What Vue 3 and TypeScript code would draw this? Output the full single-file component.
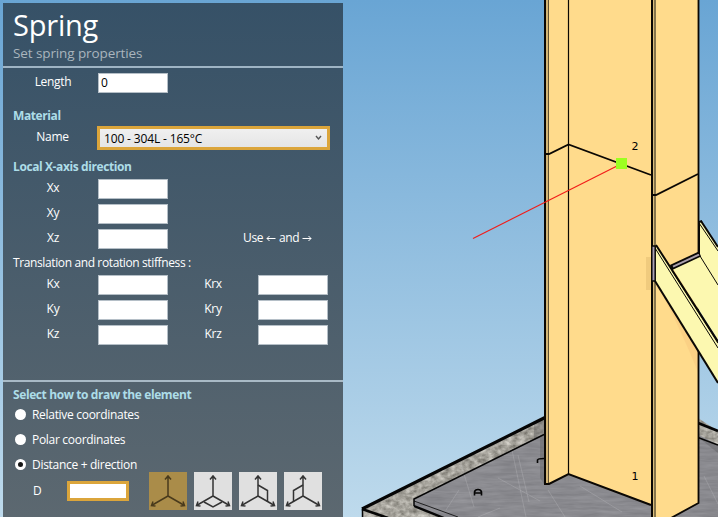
<script setup lang="ts">
import { ref } from 'vue'

const length = ref('0')
const distance = ref('')
const material = '100 - 304L - 165°C'
const axes = ['Xx', 'Xy', 'Xz']
const stiffness: [string, string][] = [
  ['Kx', 'Krx'],
  ['Ky', 'Kry'],
  ['Kz', 'Krz'],
]
const modes = ['Relative coordinates', 'Polar coordinates', 'Distance + direction']
const mode = ref(2)
const planes: string[] = [
  '',
  'M10 30 19 35 28 30',
  'M19 13 28.500 18.500V29.500',
  'M19 13 9.500 18.500V29.500',
]
const plane = ref(0)
</script>

<template>
  <main class="app">
    <svg class="scene" viewBox="0 0 718 517" width="718" height="517">
      <defs>
        <filter id="grain" x="0" y="0" width="1" height="1" color-interpolation-filters="sRGB">
          <feTurbulence type="fractalNoise" baseFrequency="0.16 0.22" numOctaves="3" seed="4" />
          <feColorMatrix values="0.5 0 0 0 0.4  0.5 0 0 0 0.39  0.5 0 0 0 0.36  0 0 0 0 1" />
          <feComposite in2="SourceGraphic" operator="in" />
        </filter>
        <filter id="steel" x="0" y="0" width="1" height="1" color-interpolation-filters="sRGB">
          <feTurbulence type="fractalNoise" baseFrequency="0.04 0.3" numOctaves="3" seed="8" />
          <feColorMatrix values="0.12 0 0 0 0.48  0.12 0 0 0 0.48  0.12 0 0 0 0.5  0 0 0 0 1" />
          <feComposite in2="SourceGraphic" operator="in" />
        </filter>
      </defs>

      <!-- concrete block and base plate -->
      <path filter="url(#grain)" d="M362 509 544 418H698L718 431V517H362Z" />
      <path filter="url(#steel)" d="M414 499 544 434.5H698L718 445V517H442L414 507Z" />
      <path fill="#55555a" opacity=".35" d="M534 423 544 418V484L540 478V438L534 440ZM699 438 718 445V453Z" />
      <g fill="none" stroke="#c4c4c8" stroke-width=".8" opacity=".35">
        <path d="M461 464 474 507M512 450 526 517M518 455 529 502M548 490 565 517M459 490 446 510M498 478 540 501M580 486 622 512M704 476 718 504M478 517 500 508" />
      </g>
      <g fill="none" stroke="#050505">
        <path stroke-width="3.2" d="M362 509 545 417.500" />
        <path stroke-width="2.600" d="M362 509 388 518M698 423 718 431" />
        <path stroke-width="1.500" d="M362.500 509V517M544 434.500 414 499V506M698 437.500 718 445" />
        <path stroke-width="2.400" d="M414 506 444 518" />
        <path stroke-width=".8" d="M414 501 458 517" />
        <path stroke-width="1.600" d="M474.500 495.500V492Q475 489.500 478 489.500T481.500 492V495.500M475 493H481M537.500 463V460Q538 458.500 544 458.500" />
      </g>

      <!-- column -->
      <path fill="#ffdb8c" d="M544.500 0H698.500V503L672 517H652V505L568.500 474 549 484H544.500Z" />
      <path fill="#f0cb7e" d="M646 257H651V290H646Z" />
      <path fill="#fbd185" d="M656 284 698 350V372Q676 318 656 284Z" />
      <path fill="#d3b574" d="M545.500 0H548V483H545.500Z" />
      <path fill="#dcbe7b" d="M652 0H654V517H652Z" />
      <path fill="#86754c" d="M654 0H656V517H654Z" />
      <g fill="none" stroke="#0a0703">
        <path stroke-width="2" d="M545 0V484H549L568.500 474 651 505" />
        <path stroke-width="2" d="M652 0V517" />
        <path stroke-width="1" d="M548.500 0V483" opacity=".65" />
        <path stroke-width="1.200" d="M568.500 0V474" />
        <path stroke-width="1.800" d="M698.500 0V503L671 518" />
        <path stroke-width="1.800" d="M545 154H549L568.500 144.500 651 175M652 195H656L698 174" />
      </g>

      <!-- brace -->
      <path fill="#fcf8b0" d="M699 223 701 221 718 247V340L672 267 699 254Z" />
      <path fill="#fcf8b0" d="M655 245 718 341V383L655 281Z" />
      <g fill="none" stroke="#0a0805">
        <path stroke-width="5.500" d="M671 267.500 700 254" />
        <path stroke="#aaa0ad" stroke-width="2" d="M673 266.700 699 254.600" />
        <path stroke-width="2" d="M701 221 718 247M656 245 718 341.500" />
        <path stroke-width="1" d="M699 223 718 251M700 256 718 285M655 248 718 348" />
        <path stroke-width="1.200" d="M672 270.500 718 343" />
        <path stroke-width="2" d="M655 281 718 383" />
        <path stroke-width="2" d="M699 254V222L702 221" />
      </g>
      <path fill="#aaa0b5" stroke="#0a0805" stroke-width="1.500" d="M651.800 246H655.200V281H651.800Z" />

      <path stroke="#f21c18" stroke-width="1.150" d="M473 238.500 618 165.500" />
      <path fill="#9cff20" d="M616 158H627V169H616Z" />
      <text x="631.500" y="150">2</text>
      <text x="631.500" y="480">1</text>
    </svg>

    <section class="panel">
      <header>
        <h1>Spring</h1>
        <p>Set spring properties</p>
      </header>

      <form class="properties" @submit.prevent>
        <div class="row first">
          <label>Length</label>
          <input v-model="length" />
        </div>
        <h2 class="material">Material</h2>
        <div class="row name">
          <label>Name</label>
          <button type="button" class="combo">
            <span>{{ material }}</span>
            <svg width="7" height="6" viewBox="0 0 7 6"><path d="M1 1 3.500 4 6 1" fill="none" stroke="#555" stroke-width="1.400" /></svg>
          </button>
        </div>
        <h2 class="local">Local X-axis direction</h2>
        <div v-for="a in axes" :key="a" class="row">
          <label>{{ a }}</label>
          <input />
          <span v-if="a === 'Xz'" class="hint">Use
            <svg width="10" height="7" viewBox="0 0 10 7"><path d="M9.500 3.500H1M3.500 1 1 3.500 3.500 6" /></svg>
            and
            <svg width="10" height="7" viewBox="0 0 10 7"><path d="M.5 3.500H9M6.500 1 9 3.500 6.500 6" /></svg>
          </span>
        </div>
        <p class="caption">Translation and rotation stiffness :</p>
        <div v-for="[k, r] in stiffness" :key="k" class="row">
          <label>{{ k }}</label>
          <input />
          <label>{{ r }}</label>
          <input />
        </div>
      </form>

      <section class="drawing">
        <h2>Select how to draw the element</h2>
        <div v-for="(m, i) in modes" :key="m" class="radio" @click="mode = i">
          <i :class="{ on: mode === i }"></i>
          <span>{{ m }}</span>
        </div>
        <div class="direction">
          <label>D</label>
          <input v-model="distance" />
          <div class="planes">
            <button v-for="(p, i) in planes" :key="i" type="button" :class="{ on: plane === i }" @click="plane = i">
              <svg width="38" height="38" viewBox="0 0 38 38">
                <path d="M19 4V24L2.500 33.500M19 24 35.500 33.500M16 7.500 19 4 22 7.500M4 29.500 2.500 33.500 6.500 34M34 29.500 35.500 33.500 31.500 34" />
                <path v-if="p" :d="p" />
              </svg>
            </button>
          </div>
        </div>
      </section>
    </section>
  </main>
</template>

<style>
body {
  margin: 0;
  overflow: hidden;
}
</style>

<style scoped>
.app {
  box-sizing: border-box;
  position: relative;
  width: 718px;
  height: 517px;
  padding: 3px 0 0 3px;
  overflow: hidden;
  background: linear-gradient(#69a5d4, #bedaec);
  font: 12px/16px "Open Sans", "Noto Sans", sans-serif;
  letter-spacing: -0.3px;
  color: #fff;
}
.scene {
  position: absolute;
  left: 0;
  top: 0;
}
.scene text {
  font: 11px "DejaVu Sans", sans-serif;
  fill: #000;
}
.panel {
  position: relative;
  width: 340px;
  height: 514px;
  background: linear-gradient(#365167, #5c6870);
}
h1, h2, p {
  margin: 0;
}
header {
  box-sizing: border-box;
  height: 65px;
  padding: 3px 10px 0;
  border-bottom: 2px solid #9fb4c4;
}
h1 {
  font-size: 29px;
  font-weight: 400;
  line-height: 38px;
  letter-spacing: -0.2px;
}
header p {
  color: #a9b5bd;
  font-size: 13.5px;
  line-height: 18px;
  letter-spacing: -0.1px;
}
h2 {
  color: #addde8;
  font-size: 12px;
  font-weight: 700;
  line-height: 16px;
  letter-spacing: -0.4px;
}
.properties {
  box-sizing: border-box;
  height: 314px;
  padding: 5px 10px 0;
  border-bottom: 2px solid #a9bac6;
}
.row {
  display: grid;
  grid-template-columns: 80px 70px 80px 70px;
  column-gap: 5px;
  height: 25px;
}
.row label {
  text-align: center;
  line-height: 17px;
}
input {
  box-sizing: border-box;
  width: 70px;
  height: 20px;
  padding: 0 2px 2px;
  border: 1px solid #b5bfc7;
  border-radius: 0;
  background: #fff;
  color: #000;
  font: inherit;
  outline: 0;
}
.first {
  height: 35px;
}
.name {
  grid-template-columns: 79px 233px;
  height: 33px;
}
.name label {
  padding-top: 2px;
}
.combo {
  box-sizing: border-box;
  display: flex;
  align-items: center;
  justify-content: space-between;
  height: 24px;
  padding: 2px 5px 0 4px;
  border: 3px solid #dba53b;
  background: linear-gradient(#f0f0f0, #e5e5e5);
  color: #000;
  font: inherit;
  letter-spacing: -0.15px;
}
.combo svg {
  margin-bottom: 3px;
}
.local {
  margin-bottom: 4px;
}
.material {
  margin-bottom: 2px;
}
.hint {
  grid-column: 3 / 5;
  padding-left: 70px;
  white-space: nowrap;
  line-height: 17px;
}
.hint path {
  fill: none;
  stroke: #fff;
}
.caption {
  margin: 1px 0 4px;
  letter-spacing: -0.38px;
}
.drawing {
  padding: 5px 10px 0;
}
.radio {
  display: flex;
  align-items: center;
  gap: 6px;
  height: 25px;
  padding-left: 2px;
  margin-top: -1px;
  margin-bottom: 1px;
}
.radio i {
  box-sizing: border-box;
  width: 11px;
  height: 11px;
  border-radius: 50%;
  background: #fff;
}
.radio i.on {
  border: 3px solid #fff;
  background: #151515;
}
.direction {
  display: flex;
  padding-top: 1px;
}
.direction label {
  width: 34px;
  padding-left: 20px;
  line-height: 24px;
}
.direction input {
  width: 62px;
  height: 20px;
  margin-top: 2px;
  border: 3px solid #dba53b;
}
.planes {
  display: flex;
  gap: 7px;
  margin: -7px 0 0 20px;
}
.planes button {
  width: 38px;
  height: 38px;
  padding: 0;
  border: 0;
  background: #e0e0e0;
}
.planes button.on {
  background: #aa8c49;
}
.planes svg {
  display: block;
}
.planes path {
  fill: none;
  stroke: #333;
  stroke-width: 1.5;
}
.planes .on path {
  stroke: #493a1c;
}
</style>
